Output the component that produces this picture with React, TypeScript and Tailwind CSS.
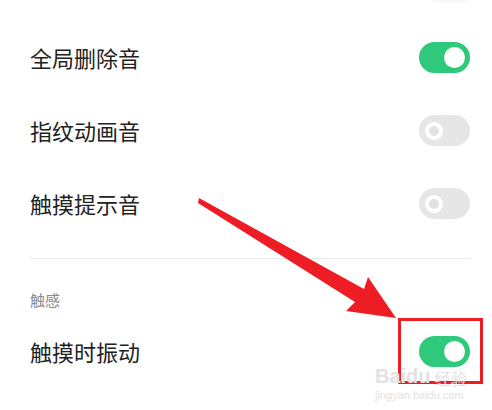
const Toggle = ({ on }: { on: boolean }) => {
  if (on) {
    return (
      <div className="w-[51px] h-[31px] rounded-full bg-[#2fc97b] flex items-center justify-end pr-[5px]">
        <div className="w-[21px] h-[21px] rounded-full bg-white" />
      </div>
    );
  }
  return (
    <div className="w-[51px] h-[31px] rounded-full bg-[#e6e6e6] flex items-center pl-[6px]">
      <div className="w-[18px] h-[18px] rounded-full border-[4px] border-white bg-[#e2e2e2]" />
    </div>
  );
};

const Row = ({ label, on }: { label: string; on: boolean }) => (
  <div className="h-[73px] flex items-center justify-between">
    <span className="text-[22px] text-[#222]">{label}</span>
    <Toggle on={on} />
  </div>
);

export default function App() {
  return (
    <div
      className="relative w-[492px] h-[410px] bg-white overflow-hidden"
      style={{ fontFamily: '"Noto Sans CJK SC", "Noto Sans", sans-serif' }}
    >
      {/* faint toggle cut off at top */}
      <div className="absolute right-[16px] top-[-28px] w-[51px] h-[31px] rounded-full bg-[#f8f8f8]" />

      <div className="pl-[30px] pr-[22px] pt-[21px]">
        <Row label="全局删除音" on={true} />
        <Row label="指纹动画音" on={false} />
        <Row label="触摸提示音" on={false} />
        <div className="mt-[18px] h-px bg-[#e8e8e8]" />
        <div className="pt-[29px] text-[15px] leading-[24px] text-[#8a8a8a]">触感</div>
        <div className="h-[78px] flex items-center justify-between">
          <span className="text-[22px] text-[#222]">触摸时振动</span>
          <Toggle on={true} />
        </div>
      </div>

      {/* annotation arrow */}
      <svg className="absolute left-0 top-0" width="492" height="410" viewBox="0 0 492 410">
        <polygon
          points="199,198 364,289 368,277 396,318 346,311 355,302 198,203"
          fill="#ee1c25"
        />
        <rect x="399.5" y="319.5" width="82" height="63" fill="none" stroke="#ee1c25" strokeWidth="3" />
      </svg>

      {/* watermark */}
      <div className="absolute left-[375px] top-[366px] flex flex-col items-start leading-none text-[#e2e2e2]">
        <div className="flex items-end gap-[4px]">
          <span className="text-[20px] font-bold" style={{ fontFamily: '"Liberation Sans", sans-serif' }}>
            Baidu
          </span>
          <span className="text-[16px]">经验</span>
        </div>
        <span className="text-[11px] mt-[4px]" style={{ fontFamily: '"Liberation Sans", sans-serif' }}>
          jingyan.baidu.com
        </span>
      </div>
    </div>
  );
}
